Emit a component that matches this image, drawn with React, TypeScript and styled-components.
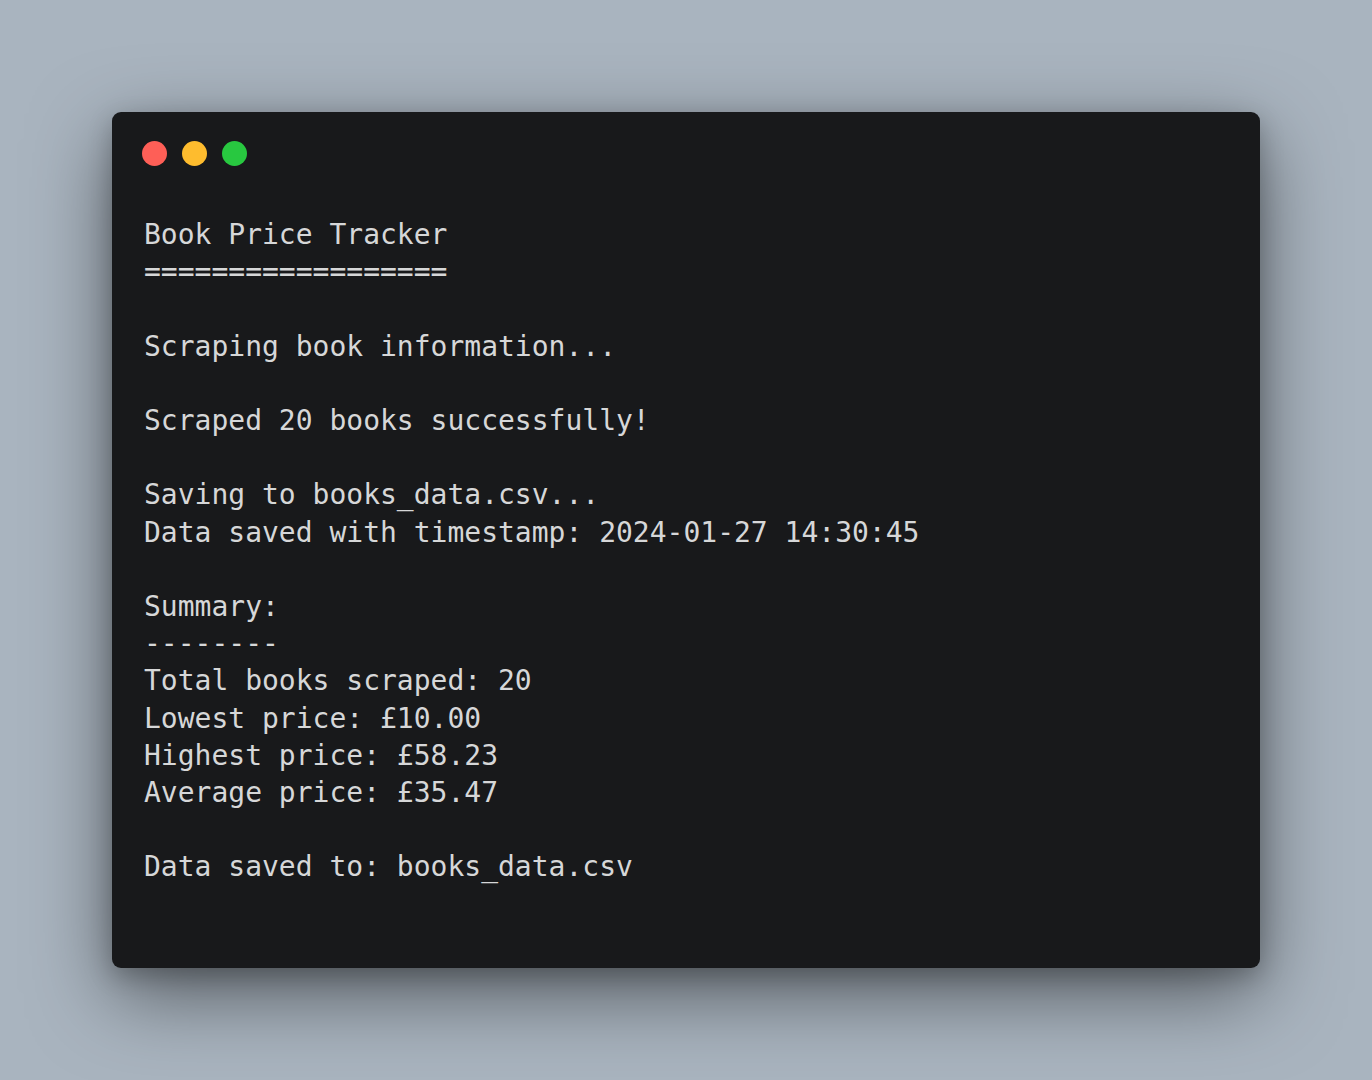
import React from "react";
import styled, { createGlobalStyle } from "styled-components";

const Global = createGlobalStyle`
  html, body { margin: 0; padding: 0; }
  body { background: #a9b4bf; }
`;

const Page = styled.div`
  width: 1372px;
  height: 1080px;
  display: flex;
  align-items: center;
  justify-content: center;
  background: #a9b4bf;
`;

const Window = styled.div`
  width: 1148px;
  height: 856px;
  box-sizing: border-box;
  background: #18191b;
  border-radius: 9px;
  box-shadow: 0 26px 80px rgba(0, 0, 0, 0.5), 0 8px 24px rgba(0, 0, 0, 0.22);
  display: flex;
  flex-direction: column;
`;

const TitleBar = styled.div`
  display: flex;
  gap: 15px;
  padding: 29px 0 0 30px;
`;

const Dot = styled.span<{ $color: string }>`
  width: 25px;
  height: 25px;
  border-radius: 50%;
  background: ${(p) => p.$color};
`;

const Output = styled.pre`
  margin: 0;
  padding: 50px 32px 0 32px;
  font-family: "DejaVu Sans Mono", monospace;
  font-size: 28px;
  line-height: 37.2px;
  color: #d6d7d8;
  white-space: pre;
`;

const text = `Book Price Tracker
==================

Scraping book information...

Scraped 20 books successfully!

Saving to books_data.csv...
Data saved with timestamp: 2024-01-27 14:30:45

Summary:
--------
Total books scraped: 20
Lowest price: £10.00
Highest price: £58.23
Average price: £35.47

Data saved to: books_data.csv`;

export default function App() {
  return (
    <>
      <Global />
      <Page>
        <Window>
          <TitleBar>
            <Dot $color="#fe5f57" />
            <Dot $color="#febc2e" />
            <Dot $color="#28c840" />
          </TitleBar>
          <Output>{text}</Output>
        </Window>
      </Page>
    </>
  );
}
